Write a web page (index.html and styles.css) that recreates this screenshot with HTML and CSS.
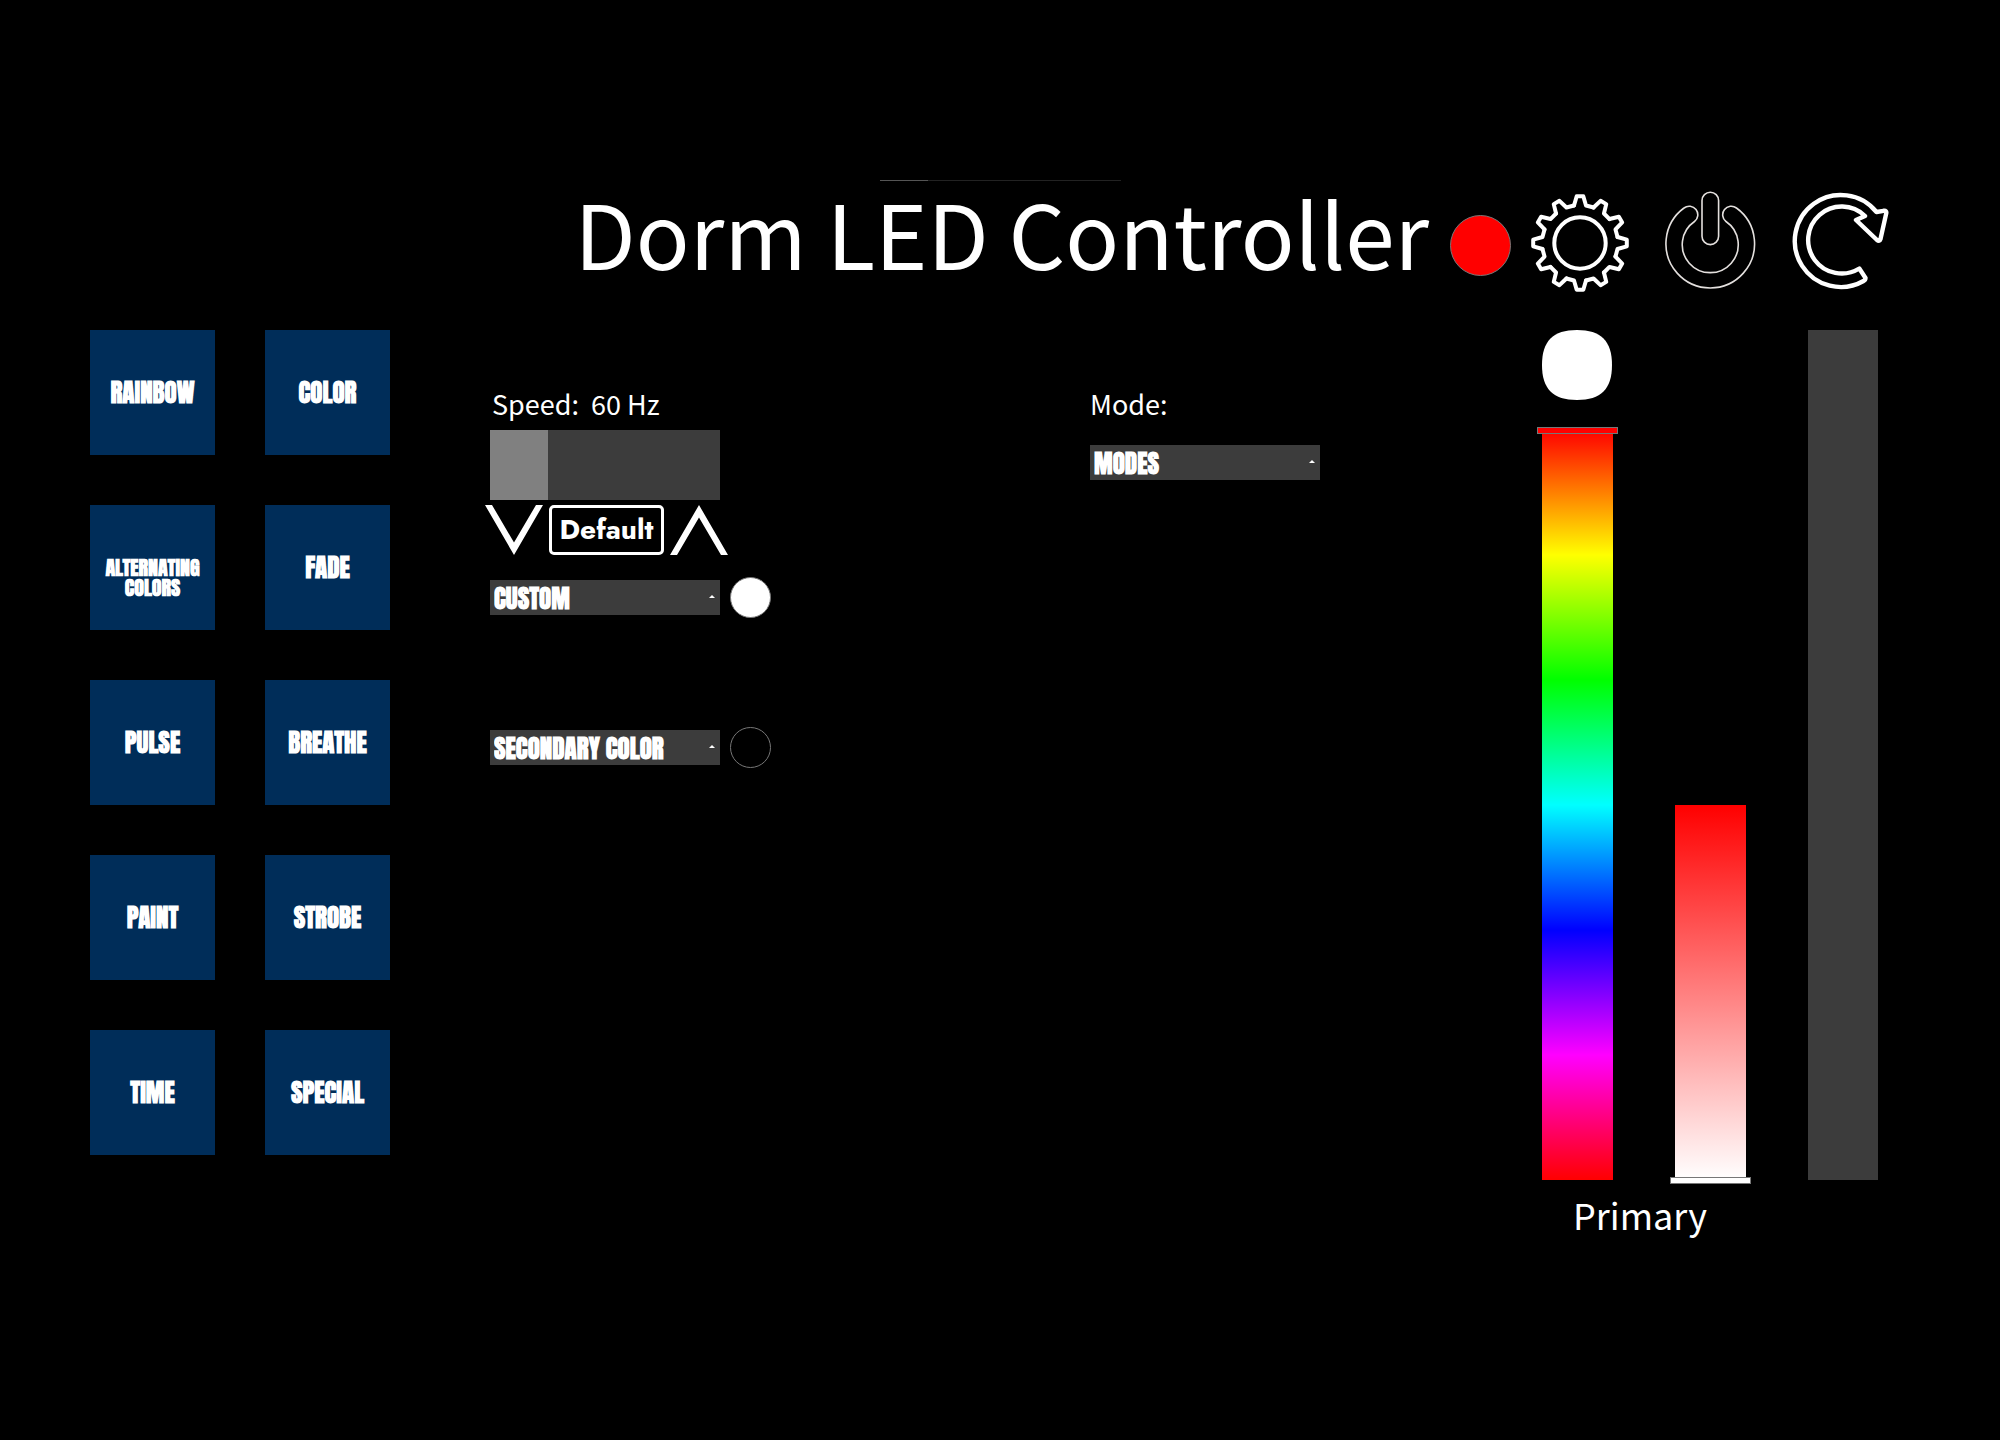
FILE: index.html
```html
<!DOCTYPE html>
<html lang="en">
<head>
<meta charset="utf-8">
<meta name="viewport" content="width=device-width, initial-scale=1">
<title>Dorm LED Controller</title>
<link rel="stylesheet" href="styles.css">
</head>
<body>
<div class="strip-preview"></div>
<header class="header">
  <h1 class="title">Dorm LED Controller</h1>
  <span class="status"></span>
  <nav class="actions">
    <button class="icon-button" type="button" aria-label="Settings">
      <svg class="icon" viewBox="0 0 100 100" fill="none" stroke="#fff" stroke-width="4" stroke-linecap="round" stroke-linejoin="round">
        <defs><path id="tooth" d="M-6-37.5L-3.3-46.8H3.3L6-37.5L13.6-35.5"/></defs>
        <g transform="translate(50 53)">
          <circle r="25.7"/>
          <use href="#tooth"/>
          <use href="#tooth" transform="rotate(30)"/>
          <use href="#tooth" transform="rotate(60)"/>
          <use href="#tooth" transform="rotate(90)"/>
          <use href="#tooth" transform="rotate(120)"/>
          <use href="#tooth" transform="rotate(150)"/>
          <use href="#tooth" transform="rotate(180)"/>
          <use href="#tooth" transform="rotate(210)"/>
          <use href="#tooth" transform="rotate(240)"/>
          <use href="#tooth" transform="rotate(270)"/>
          <use href="#tooth" transform="rotate(300)"/>
          <use href="#tooth" transform="rotate(330)"/>
        </g>
      </svg>
    </button>
    <button class="icon-button" type="button" aria-label="Power">
      <svg class="icon" viewBox="0 0 100 100" fill="none" stroke="#e4e0de" stroke-width="1.6">
        <rect x="42" y="2.2" width="16.6" height="52.400" rx="8.3"/>
        <path d="M24 18A44.3 44.3 0 1 0 76.5 18A8.1 8.1 0 1 0 66 31.5A28 28 0 1 1 34.5 31.5A8.1 8.1 0 1 0 24 18Z"/>
      </svg>
    </button>
    <button class="icon-button" type="button" aria-label="Refresh">
      <svg class="icon" viewBox="0 0 100 100" fill="none" stroke="#fff" stroke-width="4.4" stroke-linejoin="round">
        <path d="M86.500 22L93.5 20.8Q97 20.300 96.200 23.500L90.500 49Q89.500 52 87 50L66 30L75 26A33.500 33.500 0 1 0 69.300 78.500L75.500 88Q75.500 90 73.500 91A46 46 0 1 1 86.500 22Z"/>
      </svg>
    </button>
  </nav>
</header>
<main class="main">
  <section class="patterns">
    <button class="pattern" type="button">RAINBOW</button>
    <button class="pattern" type="button">COLOR</button>
    <button class="pattern pattern-long" type="button">ALTERNATING<br>COLORS</button>
    <button class="pattern" type="button">FADE</button>
    <button class="pattern" type="button">PULSE</button>
    <button class="pattern" type="button">BREATHE</button>
    <button class="pattern" type="button">PAINT</button>
    <button class="pattern" type="button">STROBE</button>
    <button class="pattern" type="button">TIME</button>
    <button class="pattern" type="button">SPECIAL</button>
  </section>

  <section class="settings">
    <label class="label" for="speed">Speed:&nbsp; 60 Hz</label>
    <input class="speed" id="speed" type="range" min="0" max="240" value="60">
    <div class="steps">
      <button class="step" type="button" aria-label="Slower">
        <svg class="chevron" viewBox="0 0 58 50"><path fill="#fff" d="M0 0H7L29 37.500L51 0H58L29 50Z"/></svg>
      </button>
      <button class="default" type="button">Default</button>
      <button class="step" type="button" aria-label="Faster">
        <svg class="chevron" viewBox="0 0 58 50"><path fill="#fff" d="M0 50H7L29 12.500L51 50H58L29 0Z"/></svg>
      </button>
    </div>
    <div class="color-row">
      <div class="dropdown"><select class="select" aria-label="Custom color"><option>CUSTOM</option></select></div>
      <span class="swatch swatch-white"></span>
    </div>
    <div class="color-row color-row-secondary">
      <div class="dropdown"><select class="select" aria-label="Secondary color"><option>SECONDARY COLOR</option></select></div>
      <span class="swatch"></span>
    </div>
  </section>

  <section class="mode">
    <label class="label" for="mode">Mode:</label>
    <div class="dropdown"><select class="select" id="mode"><option>MODES</option></select></div>
  </section>

  <section class="picker">
    <div class="channel">
      <svg class="current" viewBox="0 0 70 70"><path fill="#fff" d="M35 0C59 0 70 11 70 35S59 70 35 70S0 59 0 35S11 0 35 0Z"/></svg>
      <input class="slider hue" type="range" min="0" max="360" value="360" aria-label="Hue">
    </div>
    <div class="channel">
      <input class="slider saturation" type="range" min="0" max="100" value="0" aria-label="Saturation">
    </div>
    <div class="channel">
      <input class="slider brightness" type="range" min="0" max="100" value="0" aria-label="Brightness">
    </div>
    <p class="picker-label">Primary</p>
  </section>
</main>
</body>
</html>
```

FILE: styles.css
```css
* {
  box-sizing: border-box;
}

body {
  margin: 0;
  padding: 180px 0 0;
  background: #000;
  color: #fff;
  font-family: "Noto Sans CJK SC", "Noto Sans", sans-serif;
}

button {
  margin: 0;
  padding: 0;
  border: 0;
  background: none;
  color: #fff;
}

.strip-preview {
  width: 241px;
  height: 1px;
  margin: 0 auto;
  background: linear-gradient(to right, #555 20%, #222 20%);
}

.header {
  display: flex;
  justify-content: flex-end;
  align-items: center;
  gap: 19px;
  padding: 9px 110px 0 0;
}

.title {
  margin: 0 2px 16px 0;
  font-size: 89px;
  line-height: 82px;
  font-weight: 400;
  white-space: nowrap;
}

.status {
  width: 61px;
  height: 61px;
  margin-top: 10px;
  border: 1px solid #777;
  border-radius: 50%;
  background: #f00;
}

.actions {
  display: flex;
  gap: 30px;
}

.icon-button,
.icon {
  display: block;
  width: 100px;
  height: 100px;
  overflow: visible;
}

.main {
  display: grid;
  grid-template-columns: 300px 500fr 352fr 336px;
  column-gap: 100px;
  align-items: start;
  padding: 40px 122px 0 90px;
}

.patterns {
  display: grid;
  grid-template-columns: 125px 125px;
  gap: 50px;
}

.pattern,
.select {
  font-family: Impact, Anton, Roboto, sans-serif;
  font-weight: 700;
  font-size: 25px;
}

.pattern {
  height: 125px;
  background: #002d59;
  line-height: 30px;
}

.pattern-long {
  padding-top: 20px;
  font-size: 20px;
  line-height: 20px;
}

.settings,
.mode {
  display: flex;
  flex-direction: column;
  align-items: flex-start;
  padding-top: 54px;
}

.label {
  padding-left: 2px;
  font-size: 27px;
  line-height: 40px;
}

.mode .label {
  padding-left: 0;
  margin-bottom: 21px;
}

.speed {
  appearance: none;
  width: 230px;
  height: 70px;
  margin: 6px 0 5px;
  background: linear-gradient(to right, #808080 25%, #3c3c3c 25%);
}

.speed::-webkit-slider-thumb {
  appearance: none;
  width: 1px;
  height: 70px;
}

.steps {
  display: flex;
  gap: 6px;
  margin-left: -5px;
}

.chevron {
  display: block;
  width: 58px;
  height: 50px;
}

.default {
  width: 115px;
  height: 50px;
  border: 3px solid #fff;
  border-radius: 5px;
  font-family: Futura, Jost, Lato, sans-serif;
  font-weight: 700;
  font-size: 28px;
  line-height: 40px;
}

.color-row {
  display: flex;
  align-items: center;
  gap: 10px;
  margin-top: 22px;
}

.color-row-secondary {
  margin-top: 109px;
}

.dropdown {
  position: relative;
  width: 230px;
}

.dropdown::after {
  content: "";
  position: absolute;
  right: 5px;
  top: 15px;
  border: 3px solid transparent;
  border-top: 0;
  border-bottom-color: #fff;
  pointer-events: none;
}

.select {
  appearance: none;
  display: block;
  width: 100%;
  height: 35px;
  padding: 0 4px;
  border: 0;
  border-radius: 0;
  background: #3c3c3c;
  color: #fff;
}

.swatch {
  width: 41px;
  height: 41px;
  border: 1px solid #777;
  border-radius: 50%;
}

.swatch-white {
  background: #fff;
}

.picker {
  display: grid;
  grid-template-columns: 71px 71px 70px;
  column-gap: 62px;
}

.channel {
  display: flex;
  flex-direction: column;
  justify-content: space-between;
  align-items: center;
}

.current {
  align-self: flex-start;
  width: 70px;
  height: 70px;
  margin-bottom: 27px;
}

.slider {
  appearance: none;
  writing-mode: vertical-lr;
  direction: rtl;
  width: 81px;
  margin: 0;
  background-color: transparent;
  background-position: 5px 3px;
  background-size: 71px calc(100% - 7px);
  background-repeat: no-repeat;
}

.slider::-webkit-slider-thumb {
  appearance: none;
  width: 81px;
  height: 7px;
  border: 1px solid #777;
  background: #fff;
}

.hue {
  height: 757px;
  background-image: linear-gradient(#f00, #ff0, #0f0, #0ff, #00f, #f0f, #f00);
}

.hue::-webkit-slider-thumb {
  background: #f00;
}

.saturation {
  height: 382px;
  margin-top: auto;
  background-image: linear-gradient(#f00, #fff);
}

.brightness {
  width: 70px;
  height: 850px;
  background: #3c3c3c;
}

.brightness::-webkit-slider-thumb {
  visibility: hidden;
}

.picker-label {
  grid-column: 1 / 3;
  margin: 3px 0 0;
  padding-right: 8px;
  font-size: 36px;
  line-height: 54px;
  text-align: center;
}
```
